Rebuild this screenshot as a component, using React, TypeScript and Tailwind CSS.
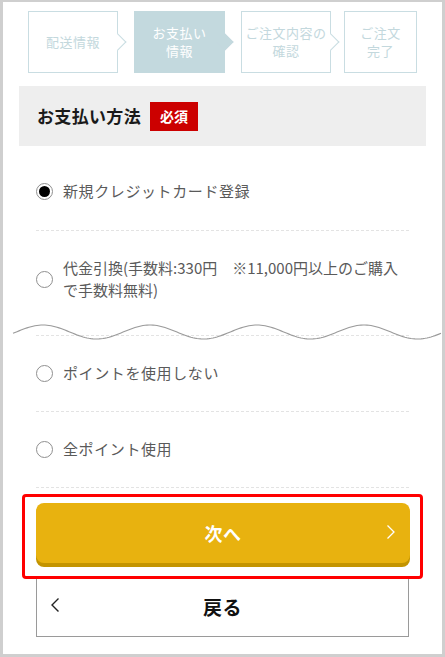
import React from "react";

const jp = { fontFamily: '"Noto Sans CJK JP", "Noto Sans", sans-serif' };

const steps = [
  { lines: ["配送情報"], active: false, arrow: true, w: "w-[90px]" },
  { lines: ["お支払い", "情報"], active: true, arrow: true, w: "w-[91px]" },
  { lines: ["ご注文内容の", "確認"], active: false, arrow: true, w: "w-[90px]" },
  { lines: ["ご注文", "完了"], active: false, arrow: false, w: "w-[73px]" },
];

function Step({ s }: { s: (typeof steps)[number] }) {
  return (
    <div
      className={`relative h-[62px] ${s.w} flex flex-col items-center justify-center border text-[13px] leading-[18px] tracking-[0.04em] ${
        s.active ? "bg-[#c3d9de] border-[#c3d9de] text-white" : "bg-white border-[#c9dde2] text-[#c3d8dd]"
      }`}
    >
      {s.lines.map((l) => (
        <span key={l}>{l}</span>
      ))}
      {s.arrow && (
        <span
          className={`absolute right-[-7px] top-[24px] w-[12px] h-[12px] rotate-45 border-t border-r ${
            s.active ? "bg-[#c3d9de] border-[#c3d9de]" : "bg-white border-[#c9dde2]"
          }`}
        />
      )}
    </div>
  );
}

function Radio({ checked }: { checked?: boolean }) {
  return (
    <span className="shrink-0 w-[17px] h-[17px] rounded-full border-[1.5px] border-[#8f8f8f] bg-white flex items-center justify-center">
      {checked && <span className="w-[11px] h-[11px] rounded-full bg-black" />}
    </span>
  );
}

function Wave() {
  const pts: string[] = [];
  for (let x = 10; x <= 438; x += 2) {
    const y = 20 - 7 * Math.cos((2 * Math.PI * (x - 40)) / 107);
    pts.push(`${x},${y.toFixed(2)}`);
  }
  return (
    <svg className="absolute left-0 top-[310px]" width="445" height="40" viewBox="0 0 445 40">
      <polyline points={pts.join(" ")} fill="none" stroke="#9a9a9a" strokeWidth="1.1" />
    </svg>
  );
}

export default function App() {
  return (
    <div style={jp} className="relative w-[445px] h-[657px] bg-white border-[3px] border-t-2 border-[#cfcfcf] overflow-hidden">
      {/* steps */}
      <div className="flex justify-center gap-4 pt-[9px]">
        {steps.slice(0, 3).map((s) => (
          <Step key={s.lines[0]} s={s} />
        ))}
        <div className="-ml-[3px]">
          <Step s={steps[3]} />
        </div>
      </div>

      <div className="px-4 mt-[13px]">
        {/* header */}
        <div className="h-[60px] bg-[#eeeeee] flex items-center pl-[18px] gap-[9px]">
          <span className="text-[17px] font-bold text-[#1a1a1a] tracking-[0.02em]">お支払い方法</span>
          <span className="h-[29px] w-[48px] bg-[#cc0000] text-white text-[14px] font-bold flex items-center justify-center">
            必須
          </span>
        </div>

        <div className="px-[17px] text-[15px] text-[#5a5a5a] tracking-[0.04em]">
          <div className="flex items-center gap-[10px] pt-[34px] pb-[28px] leading-[22px] border-b border-dashed border-[#e3e3e3]">
            <Radio checked />
            <span>新規クレジットカード登録</span>
          </div>
          <div className="flex items-center gap-[10px] pt-[26px] pb-[34px] leading-[22px] border-b border-dashed border-[#e3e3e3]">
            <Radio />
            <span className="tracking-[0]">
              代金引換(手数料:330円　※11,000円以上のご購入で手数料無料)
            </span>
          </div>
          <div className="flex items-center gap-[10px] pt-[26px] pb-[27px] leading-[22px] border-b border-dashed border-[#e3e3e3]">
            <Radio />
            <span>ポイントを使用しない</span>
          </div>
          <div className="flex items-center gap-[10px] pt-[26px] pb-[27px] leading-[22px] border-b border-dashed border-[#e3e3e3]">
            <Radio />
            <span>全ポイント使用</span>
          </div>

          {/* next button, highlighted */}
          <div className="mt-[6px] -mx-[14px] border-[3px] border-[#ff0000] rounded-[4px] pl-[11px] pr-[10px] pt-[8px] pb-[11px]">
            <button className="relative w-full h-[60px] rounded-[8px] bg-[#e8b20f] shadow-[0_4px_0_#c39400] text-white text-[18px] font-bold flex items-center justify-center -translate-y-[2px]">
              次へ
              <svg className="absolute right-[14px] top-[21px]" width="10" height="16" viewBox="0 0 10 16">
                <path d="M1.5 1.5 L8 8 L1.5 14.5" fill="none" stroke="white" strokeWidth="1.3" />
              </svg>
            </button>
          </div>

          {/* back */}
          <button className="relative w-full h-[58px] border border-t-0 border-[#9a9a9a] text-[19px] font-bold text-[#111] flex items-center justify-center">
            戻る
            <svg className="absolute left-[13px] top-[18px]" width="10" height="16" viewBox="0 0 10 16">
              <path d="M8.5 1.5 L2 8 L8.5 14.5" fill="none" stroke="#222" strokeWidth="1.4" />
            </svg>
          </button>
        </div>
      </div>

      <Wave />
    </div>
  );
}
